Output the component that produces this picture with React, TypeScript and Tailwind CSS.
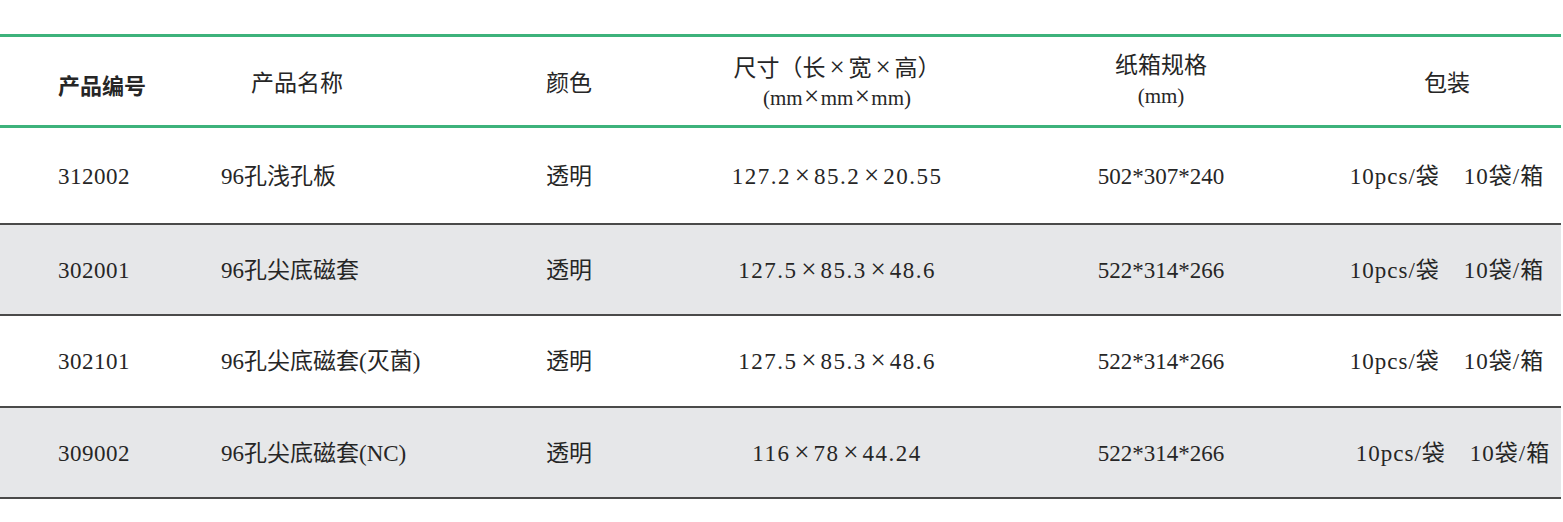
const rows = [
  {
    code: '312002',
    name: '96孔浅孔板',
    color: '透明',
    size: '127.2×85.2×20.55',
    carton: '502*307*240',
    bg: 'bg-white',
    h: 'h-[97px]',
    pack: 'pr-[15px]',
  },
  {
    code: '302001',
    name: '96孔尖底磁套',
    color: '透明',
    size: '127.5×85.3×48.6',
    carton: '522*314*266',
    bg: 'bg-[#e6e7e9]',
    h: 'h-[91px]',
    pack: 'pr-[15px]',
  },
  {
    code: '302101',
    name: '96孔尖底磁套(灭菌)',
    color: '透明',
    size: '127.5×85.3×48.6',
    carton: '522*314*266',
    bg: 'bg-white',
    h: 'h-[92px]',
    pack: 'pr-[15px]',
  },
  {
    code: '309002',
    name: '96孔尖底磁套(NC)',
    color: '透明',
    size: '116×78×44.24',
    carton: '522*314*266',
    bg: 'bg-[#e6e7e9]',
    h: 'h-[91px]',
    pack: 'pr-[3px]',
  },
];

const cols = 'grid grid-cols-[221px_325px_154px_274px_374px_1fr] items-center';

// 全角乘号
function Times({ w = 'w-[23px]' }: { w?: string }) {
  return <span className={`inline-block ${w} text-center text-[27px] leading-none`}>×</span>;
}

function Size({ value }: { value: string }) {
  const parts = value.split('×');
  return (
    <>
      {parts.map((p, i) => (
        <span key={i}>
          {i > 0 && <Times />}
          <span className="tracking-[1.5px]">{p}</span>
        </span>
      ))}
    </>
  );
}

export default function App() {
  return (
    <div className="w-[1563px] h-[522px] bg-white pt-[34px] font-['Liberation_Serif','Noto_Sans_CJK_SC',serif] text-[23px] text-[#262626]">
      <div className="w-[1561px]">
        {/* 表头 */}
        <div className={`${cols} h-[94px] border-y-[3px] border-[#3db27b]`}>
          <div className="pl-[58px] font-bold font-['Noto_Sans_CJK_SC',sans-serif] text-[22px] pt-[6px]">
            产品编号
          </div>
          <div className="pl-[30px] pt-[6px]">产品名称</div>
          <div className="pt-[6px]">颜色</div>
          <div className="text-center leading-[28px] pt-[4px]">
            <div>
              尺寸（长<Times />宽<Times />高）
            </div>
            <div className="text-[21px]">
              (mm<Times w="w-[18px]" />mm<Times w="w-[18px]" />mm)
            </div>
          </div>
          <div className="text-center leading-[30px]">
            <div>纸箱规格</div>
            <div className="text-[21px]">(mm)</div>
          </div>
          <div className="text-center pr-[15px] pt-[6px]">包装</div>
        </div>

        {/* 数据行 */}
        {rows.map((r) => (
          <div
            key={r.code}
            className={`${cols} ${r.h} ${r.bg} pt-[3px] border-b-2 border-[#4a4a4a]`}
          >
            <div className="pl-[58px] tracking-[0.5px]">{r.code}</div>
            <div>{r.name}</div>
            <div>{r.color}</div>
            <div className="text-center whitespace-nowrap">
              <Size value={r.size} />
            </div>
            <div className="text-center">{r.carton}</div>
            <div className={`text-center whitespace-nowrap tracking-[1px] ${r.pack}`}>
              10pcs/袋<span className="ml-[24px]">10袋/箱</span>
            </div>
          </div>
        ))}
      </div>
    </div>
  );
}
